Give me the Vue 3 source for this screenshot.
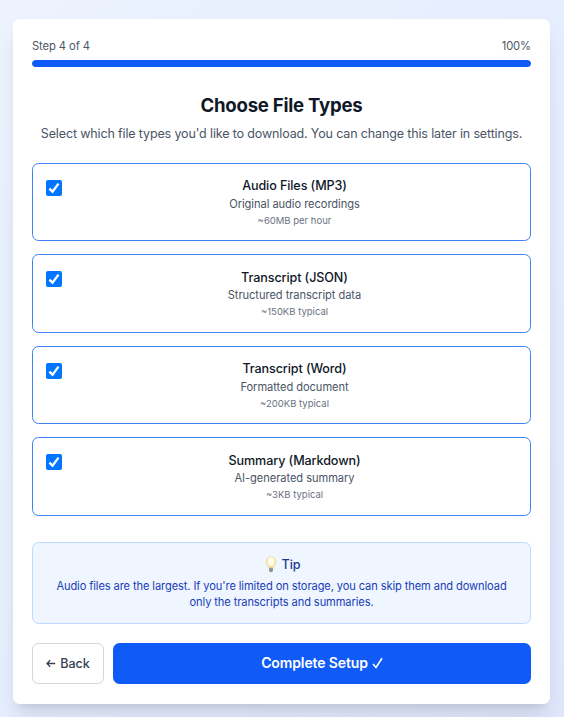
<script setup>
import { ref } from 'vue'

const progress = ref(100)
const options = ref([
  { id: 'mp3', title: 'Audio Files (MP3)', text: 'Original audio recordings', size: '~60MB per hour', checked: true },
  { id: 'json', title: 'Transcript (JSON)', text: 'Structured transcript data', size: '~150KB typical', checked: true },
  { id: 'word', title: 'Transcript (Word)', text: 'Formatted document', size: '~200KB typical', checked: true },
  { id: 'md', title: 'Summary (Markdown)', text: 'AI-generated summary', size: '~3KB typical', checked: true },
])
</script>

<template>
  <main class="page">
    <section class="card">
      <div class="steps"><span>Step 4 of 4</span><span>{{ progress }}%</span></div>
      <div class="track"><div class="fill" :style="{ width: progress + '%' }"></div></div>

      <h1>Choose File Types</h1>
      <p class="lead">Select which file types you'd like to download. You can change this later in settings.</p>

      <div class="options">
        <label v-for="o in options" :key="o.id" class="option">
          <input v-model="o.checked" class="native" type="checkbox" />
          <span class="box" :class="{ on: o.checked }">
            <svg v-if="o.checked" viewBox="0 0 16 16"><path d="M3.4 8.7 6.5 11.7 12.5 3.6" /></svg>
          </span>
          <span class="body">
            <span class="name">{{ o.title }}</span>
            <span class="desc">{{ o.text }}</span>
            <span class="size">{{ o.size }}</span>
          </span>
        </label>
      </div>

      <aside class="tip">
        <div class="tip-title">
          <svg class="bulb" viewBox="0 0 12 17">
            <path d="M6 .7C3 .7 1 2.8 1 5.6c0 2.4 1.7 3.5 2.2 6h5.6c.5-2.5 2.2-3.6 2.2-6C11 2.8 9 .7 6 .7Z" fill="#fbe6a6" stroke="#ead9aa" stroke-width=".6" />
            <ellipse cx="6" cy="5.6" rx="3.2" ry="4" fill="#fffdec" />
            <path d="M4 11.7h4v3L7.1 16.3H4.9L4 14.7Z" fill="#a3a39f" />
            <path d="M4 13.2h4M4.3 14.7h3.4" stroke="#77797b" stroke-width=".6" />
          </svg>
          <span>Tip</span>
        </div>
        <p>Audio files are the largest. If you're limited on storage, you can skip them and download only the transcripts and summaries.</p>
      </aside>

      <div class="actions">
        <button class="back" type="button">
          <svg viewBox="0 0 11 10"><path d="M10.2 5H1M4.6 1.4 1 5l3.6 3.6" /></svg>
          <span>Back</span>
        </button>
        <button class="done" type="button">
          <span>Complete Setup</span>
          <svg viewBox="0 0 11 12"><path d="M1 7 4 10.5 10 1.2" /></svg>
        </button>
      </div>
    </section>
  </main>
</template>

<style>
body { margin: 0; }
</style>

<style scoped>
.page {
  box-sizing: border-box;
  min-height: 717px;
  padding: 19px 14px 13px 13px;
  overflow: hidden;
  background: linear-gradient(to bottom right, #ecf3fe, #e0e7fd);
  font-family: Inter, "Liberation Sans", sans-serif;
  color: #101828;
}
.card {
  box-sizing: border-box;
  height: 685px;
  padding: 19px;
  border-radius: 6.5px;
  background: #fff;
  box-shadow: 0 16px 20px -4px rgb(0 0 0 / .1), 0 6px 8px -5px rgb(0 0 0 / .1);
}
.steps {
  display: flex;
  justify-content: space-between;
  margin-bottom: 6px;
  font-size: 11.2px;
  line-height: 16px;
  letter-spacing: -.08px;
  color: #4a5565;
}
.track { height: 7px; border-radius: 4px; background: #e5e7eb; overflow: hidden; }
.fill { height: 100%; border-radius: 4px; background: #105af8; }
h1 {
  margin: 25px 0 6px;
  text-align: center;
  font-size: 18.6px;
  line-height: 26px;
  font-weight: 700;
  letter-spacing: -.24px;
}
.lead {
  margin: 0 -10px 19px;
  text-align: center;
  white-space: nowrap;
  font-size: 12.5px;
  line-height: 20px;
  letter-spacing: -.14px;
  color: #4a5565;
}
.options { display: grid; gap: 13px; }
.option {
  box-sizing: border-box;
  position: relative;
  display: flex;
  gap: 10px;
  height: 78.4px;
  padding: 12.4px 13px 11px;
  border: 1px solid #3b82f6;
  border-radius: 6.5px;
}
.native { position: absolute; opacity: 0; }
.box {
  box-sizing: border-box;
  width: 16px;
  height: 16px;
  margin-top: 3.6px;
  border: 1px solid #767676;
  border-radius: 2px;
}
.box.on { border: 0; background: #0075ff; }
.box svg { display: block; width: 16px; height: 16px; fill: none; stroke: #fff; stroke-width: 2.3; }
.body { flex: 1; display: flex; flex-direction: column; text-align: center; }
.name { margin-bottom: -.35px; font-size: 12.6px; line-height: 20px; font-weight: 500; letter-spacing: -.11px; }
.desc { font-size: 11.1px; line-height: 17px; letter-spacing: -.05px; color: #4a5565; }
.size { font-size: 9.5px; line-height: 16px; color: #6a7282; }
.tip {
  box-sizing: border-box;
  height: 82px;
  margin-top: 26px;
  padding: 12px 13px;
  border: 1px solid #bedbff;
  border-radius: 6.5px;
  background: #eff6ff;
  text-align: center;
}
.tip-title {
  display: flex;
  justify-content: center;
  align-items: center;
  gap: 4px;
  height: 19px;
  padding-left: 3px;
  font-size: 12.6px;
  font-weight: 500;
  color: #1c398e;
}
.bulb { width: 12px; height: 17px; }
.tip p { margin: 4px 0 0; font-size: 11.1px; line-height: 16px; letter-spacing: -.1px; color: #193cb8; }
.actions { display: flex; gap: 9px; margin-top: 19px; }
button {
  box-sizing: border-box;
  display: flex;
  align-items: center;
  justify-content: center;
  height: 41px;
  padding: 0;
  border-radius: 6.5px;
  font-family: inherit;
}
button svg { fill: none; stroke: currentColor; }
.back {
  width: 72px;
  gap: 4px;
  border: 1px solid #d1d5dc;
  background: #fff;
  color: #364153;
  font-size: 12.6px;
  font-weight: 500;
  letter-spacing: -.1px;
}
.back svg { width: 10px; height: 9px; stroke-width: 1.4; }
.done {
  flex: 1;
  gap: 4px;
  padding-bottom: 1px;
  border: 0;
  background: #105af8;
  color: #fff;
  font-size: 14px;
  font-weight: 600;
  letter-spacing: -.12px;
}
.done svg { width: 11px; height: 12px; stroke-width: 1.6; }
</style>
